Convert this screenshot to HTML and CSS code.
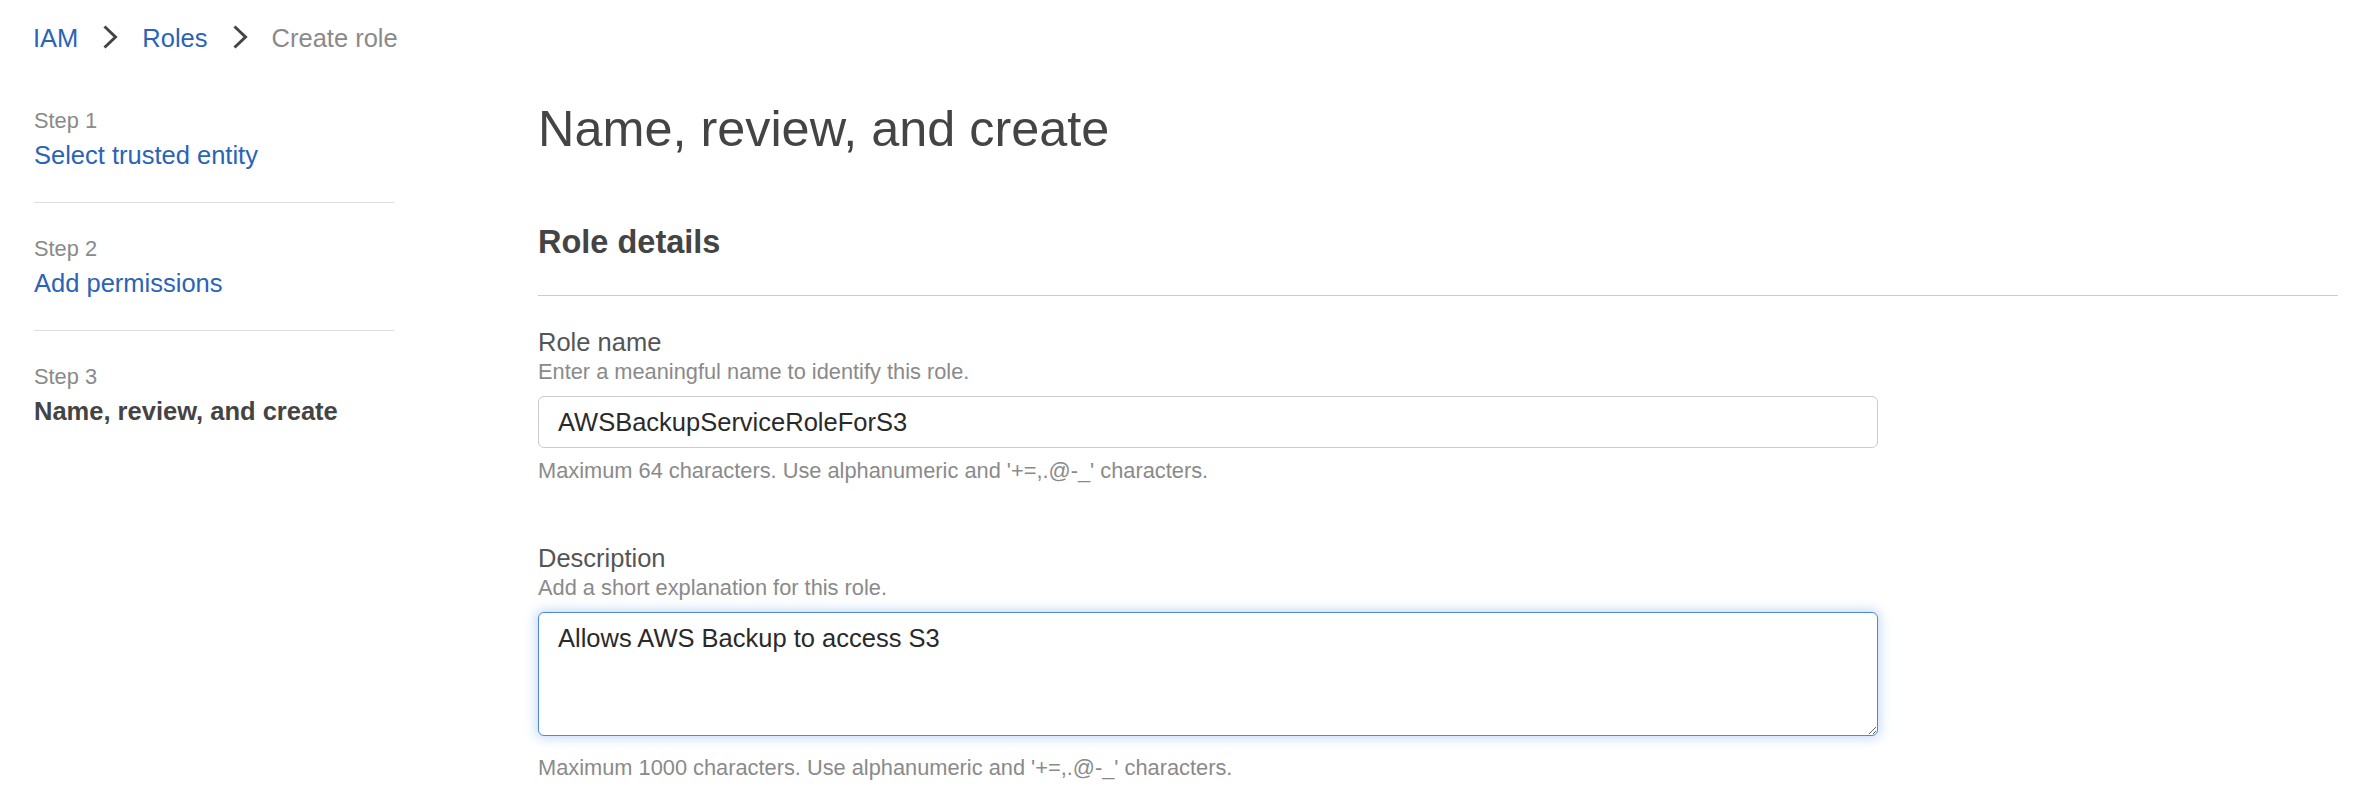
FILE: index.html
```html
<!DOCTYPE html>
<html lang="en">
<head>
<meta charset="utf-8">
<title>Create role - IAM</title>
<link rel="stylesheet" href="styles.css">
</head>
<body>
<div class="page">
  <nav class="crumbs">
    <a class="crumb-link" href="#">IAM</a>
    <svg class="chev" viewBox="0 0 16 24" width="16" height="24"><path d="M2.5 1.5 L13.5 12 L2.5 22.5" fill="none" stroke="#444" stroke-width="3" stroke-linejoin="miter"/></svg>
    <a class="crumb-link" href="#">Roles</a>
    <svg class="chev" viewBox="0 0 16 24" width="16" height="24"><path d="M2.5 1.5 L13.5 12 L2.5 22.5" fill="none" stroke="#444" stroke-width="3" stroke-linejoin="miter"/></svg>
    <span class="crumb-current">Create role</span>
  </nav>
  <div class="layout">
    <aside class="steps">
      <div class="step">
        <div class="step-num">Step 1</div>
        <a class="step-title" href="#">Select trusted entity</a>
      </div>
      <div class="step">
        <div class="step-num">Step 2</div>
        <a class="step-title" href="#">Add permissions</a>
      </div>
      <div class="step">
        <div class="step-num">Step 3</div>
        <span class="step-title step-current">Name, review, and create</span>
      </div>
    </aside>
    <main class="content">
      <h1 class="page-title">Name, review, and create</h1>
      <section class="panel">
        <h2 class="panel-title">Role details</h2>
        <div class="field">
          <label class="field-label" for="role-name">Role name</label>
          <div class="field-hint">Enter a meaningful name to identify this role.</div>
          <input id="role-name" class="text-input" type="text" value="AWSBackupServiceRoleForS3">
          <div class="field-constraint">Maximum 64 characters. Use alphanumeric and '+=,.@-_' characters.</div>
        </div>
        <div class="field field-second">
          <label class="field-label" for="role-desc">Description</label>
          <div class="field-hint">Add a short explanation for this role.</div>
          <textarea id="role-desc" class="text-area">Allows AWS Backup to access S3</textarea>
          <div class="field-constraint">Maximum 1000 characters. Use alphanumeric and '+=,.@-_' characters.</div>
        </div>
      </section>
    </main>
  </div>
</div>
</body>
</html>
```

FILE: styles.css
```css
html, body {
  margin: 0;
  padding: 0;
  background: #ffffff;
}

body {
  font-family: "Liberation Sans", Arial, Helvetica, sans-serif;
  font-size: 25.5px;
  color: #444444;
}

.page {
  padding-left: 34px;
  padding-right: 38px;
}

/* Breadcrumbs */
.crumbs {
  display: flex;
  align-items: center;
  gap: 24px;
  padding-top: 20px;
  height: 36px;
  line-height: 36px;
  margin-left: -1px;
}

.crumb-link {
  color: #2a63b8;
  text-decoration: none;
}

.crumb-current {
  color: #8a8a8a;
}

.chev {
  display: block;
  margin-top: -2px;
}

/* Layout */
.layout {
  display: flex;
  gap: 144px;
}

/* Steps sidebar */
.steps {
  width: 360px;
  flex: 0 0 360px;
  padding-top: 18.5px;
}

.step {
  padding-top: 31px;
  padding-bottom: 28.5px;
  border-bottom: 1px solid #dddddd;
}

.step:last-child {
  border-bottom: none;
}

.step-num {
  font-size: 21.8px;
  line-height: 30px;
  color: #8a8a8a;
}

.step-title {
  display: block;
  margin-top: 1.5px;
  line-height: 36px;
  color: #2a63b8;
  text-decoration: none;
}

.step-current {
  color: #444444;
  font-weight: bold;
}

/* Main content */
.content {
  flex: 1;
  padding-top: 43px;
}

.page-title {
  margin: 0;
  font-size: 50.4px;
  line-height: 60px;
  font-weight: normal;
  color: #444444;
}

.panel-title {
  margin: 62px 0 0 0;
  font-size: 32.5px;
  line-height: 42px;
  font-weight: bold;
  color: #444444;
  padding-bottom: 32px;
  border-bottom: 1px solid #cccccc;
}

.field {
  margin-top: 30px;
}

.field-second {
  margin-top: 57.5px;
}

.field-label {
  display: block;
  line-height: 32px;
  color: #555555;
}

.field-hint {
  font-size: 21.8px;
  line-height: 28px;
  color: #8a8a8a;
}

.text-input,
.text-area {
  display: block;
  box-sizing: border-box;
  width: 1340px;
  margin: 10px 0 0 0;
  padding: 7px 19px;
  font-family: "Liberation Sans", Arial, Helvetica, sans-serif;
  font-size: 25.5px;
  line-height: 36px;
  color: #2a2a2a;
  background: #ffffff;
  border-radius: 6px;
  outline: none;
}

.text-input {
  height: 52px;
  border: 1px solid #cccccc;
}

.text-area {
  height: 124px;
  border: 1px solid #4a89dc;
  box-shadow: 0 0 12px 2px rgba(60, 130, 230, 0.3);
  resize: both;
  margin-bottom: 17.5px;
}

.text-input + .field-constraint {
  margin-top: 8.5px;
}

.field-constraint {
  font-size: 21.8px;
  line-height: 28px;
  color: #8a8a8a;
}
```
